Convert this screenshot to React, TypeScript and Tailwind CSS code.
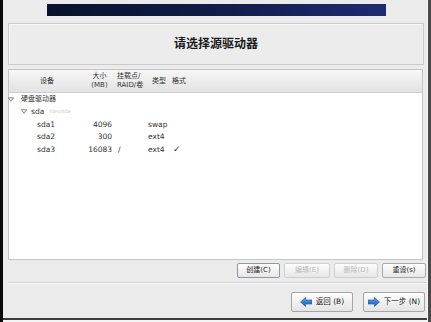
import React from "react";

const cjk = { fontFamily: '"DejaVu Sans", "Noto Sans CJK SC", sans-serif' };

function Tri() {
  return (
    <svg width="6" height="5" viewBox="0 0 6 5" className="shrink-0">
      <path d="M0.5 0.8 L5.5 0.8 L3 4.4 Z" fill="#ffffff" stroke="#6a6a6a" strokeWidth="0.8" />
    </svg>
  );
}

function Btn({ label, disabled, focus, w }: { label: string; disabled?: boolean; focus?: boolean; w: string }) {
  return (
    <div
      className={`${w} h-[15px] flex items-center justify-center rounded-[2px] border text-[7px] bg-gradient-to-b from-[#fdfdfd] to-[#e6e6e6] ${
        focus ? "border-[#8e98a8] text-[#222]" : disabled ? "border-[#cfcfcf] text-[#b9b9b9]" : "border-[#a9a9a9] text-[#222]"
      }`}
    >
      {label}
    </div>
  );
}

function Arrow({ dir }: { dir: "left" | "right" }) {
  const d =
    dir === "left"
      ? "M0.5 5 L5.5 0.5 L5.5 3 L12 3 L12 7 L5.5 7 L5.5 9.5 Z"
      : "M11.5 5 L6.5 0.5 L6.5 3 L0 3 L0 7 L6.5 7 L6.5 9.5 Z";
  return (
    <svg width="12" height="10" viewBox="0 0 12 10" className="shrink-0">
      <defs>
        <linearGradient id={`g${dir}`} x1="0" y1="0" x2="0" y2="1">
          <stop offset="0" stopColor="#5aa0ec" />
          <stop offset="1" stopColor="#1a5fbf" />
        </linearGradient>
      </defs>
      <path d={d} fill={`url(#g${dir})`} stroke="#1c4f9a" strokeWidth="0.6" />
    </svg>
  );
}

function Row({ children }: { children: React.ReactNode }) {
  return <div className="h-[12.5px] flex items-center text-[#333]">{children}</div>;
}

function Part({ name, size, mount, type, fmt }: { name: string; size: string; mount: string; type: string; fmt?: boolean }) {
  return (
    <Row>
      <div className="w-[76px] pl-[28px] text-[7.5px]">{name}</div>
      <div className="w-[29px] pr-[2px] text-right text-[7.5px]">{size}</div>
      <div className="w-[33px] pl-[4px] text-[7.5px]">{mount}</div>
      <div className="w-[25px] pl-[1px] text-[7.5px]">{type}</div>
      <div className="w-[20px] pl-[1px] text-[9px] leading-none">{fmt ? "✓" : ""}</div>
    </Row>
  );
}

export default function App() {
  return (
    <div className="w-[431px] h-[322px] flex bg-[#ebebeb] overflow-hidden" style={cjk}>
      <div className="w-[3px] h-full bg-[#0a0a0a]" />
      <div className="flex-1 flex flex-col">
        <div className="h-[318px] flex flex-col">
          <div className="mt-[4px] ml-[44px] w-[339px] h-[12px] bg-gradient-to-r from-[#08122b] via-[#111d4a] to-[#1d2c72]" />
          <div className="mt-[7px] ml-[5px] mr-[3px] h-[42px] border border-[#cbcbcb] bg-[#ececec] shadow-[inset_1px_1px_0_#f8f8f8] flex items-center justify-center">
            <span className="text-[12px] font-bold text-[#1a1a1a]">请选择源驱动器</span>
          </div>
          <div className="mt-[4px] ml-[5px] mr-[4px] h-[191px] border border-[#c4c4c4] bg-white flex flex-col">
            <div className="h-[23px] flex items-center text-[7px] text-[#333] bg-gradient-to-b from-[#f7f7f7] to-[#e2e2e2] border-b border-[#cdcdcd] leading-[9px]">
              <div className="w-[76px] text-center">设备</div>
              <div className="w-[29px] text-center">
                <div>大小</div>
                <div>(MB)</div>
              </div>
              <div className="w-[33px] pl-[3px]">
                <div>挂载点/</div>
                <div>RAID/卷</div>
              </div>
              <div className="w-[25px] pl-[5px]">类型</div>
              <div className="w-[20px] pl-[0px]">格式</div>
            </div>
            <Row>
              <div className="ml-[-1px] flex items-center">
                <Tri />
                <span className="ml-[7px] text-[7px]">硬盘驱动器</span>
              </div>
            </Row>
            <Row>
              <div className="ml-[12px] flex items-center">
                <Tri />
                <span className="ml-[4px] text-[7.5px]">sda</span>
                <span className="ml-[5px] text-[5px] text-[#c8c8c8]">/dev/sda</span>
              </div>
            </Row>
            <Part name="sda1" size="4096" mount="" type="swap" />
            <Part name="sda2" size="300" mount="" type="ext4" />
            <Part name="sda3" size="16083" mount="/" type="ext4" fmt />
          </div>
          <div className="mt-[3px] flex justify-end gap-[4px] pr-[1px]">
            <Btn label="创建(C)" focus w="w-[43px]" />
            <Btn label="编辑(E)" disabled w="w-[46px]" />
            <Btn label="删除(D)" disabled w="w-[44px]" />
            <Btn label="重设(s)" w="w-[44px]" />
          </div>
          <div className="mt-[4px] ml-[5px] h-[1px] bg-[#d4d4d4]" />
          <div className="h-[1px] ml-[5px] bg-[#f7f7f7]" />
          <div className="mt-[8px] flex justify-end gap-[10px] pr-[2px]">
            <div className="w-[62px] h-[20px] flex items-center justify-center gap-[4px] rounded-[2px] border border-[#a5a5a5] bg-gradient-to-b from-[#fdfdfd] to-[#e4e4e4] text-[7.5px] text-[#222]">
              <Arrow dir="left" />
              <span>返回 (B)</span>
            </div>
            <div className="w-[62px] h-[20px] flex items-center justify-center gap-[4px] rounded-[2px] border border-[#a5a5a5] bg-gradient-to-b from-[#fdfdfd] to-[#e4e4e4] text-[7.5px] text-[#222]">
              <Arrow dir="right" />
              <span>下一步 (N)</span>
            </div>
          </div>
        </div>
        <div className="h-[2px] bg-[#3c3c3c]" />
        <div className="flex-1 bg-[#f4f4f4]" />
      </div>
      <div className="w-[1px] h-full bg-[#f4f4f4]" />
      <div className="w-[3px] h-full bg-[#4a4a4a]" />
    </div>
  );
}
